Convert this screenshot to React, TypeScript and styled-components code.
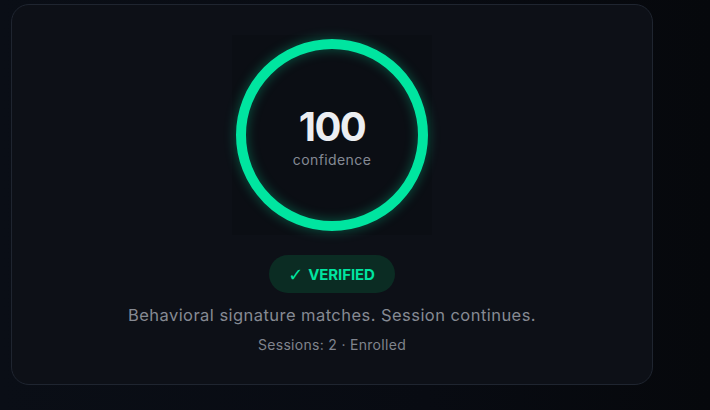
import styled, { createGlobalStyle } from "styled-components";

const GlobalStyle = createGlobalStyle`
  html, body {
    margin: 0;
    padding: 0;
    background: #07090e;
  }
  body {
    font-family: Inter, "Noto Sans", sans-serif;
    -webkit-font-smoothing: antialiased;
  }
`;

const Page = styled.div`
  width: 710px;
  height: 410px;
  box-sizing: border-box;
  padding: 4px 0 0 11px;
  background: linear-gradient(90deg, #0a0e16 0%, #080b12 60%, #06080c 100%);
`;

const Card = styled.div`
  width: 642px;
  height: 381px;
  box-sizing: border-box;
  border: 1px solid #1f2530;
  border-radius: 18px;
  background: #0d1017;
  padding-top: 30px;
  display: flex;
  flex-direction: column;
  align-items: center;
`;

const RingWrap = styled.div`
  position: relative;
  width: 200px;
  height: 200px;
  background: #0b0e14;
`;

const Ring = styled.svg`
  display: block;
  filter: drop-shadow(0 0 6px rgba(0, 230, 160, 0.35));
`;

const Center = styled.div`
  position: absolute;
  inset: 0;
  display: flex;
  flex-direction: column;
  align-items: center;
  justify-content: center;
  padding-top: 4px;
`;

const Score = styled.div`
  font-size: 40px;
  font-weight: 700;
  color: #eceef2;
  letter-spacing: -1.5px;
  line-height: 42px;
`;

const ScoreLabel = styled.div`
  font-size: 14px;
  color: #858a94;
  margin-top: 3px;
  letter-spacing: 0.4px;
`;

const Badge = styled.div`
  margin-top: 20px;
  height: 38px;
  padding: 0 20px 0 19px;
  border-radius: 19px;
  background: #0b2c23;
  color: #00e5a0;
  font-size: 15px;
  font-weight: 700;
  display: flex;
  align-items: center;
  gap: 5px;
  letter-spacing: -0.1px;
`;

const Check = styled.span`
  font-family: "DejaVu Sans", sans-serif;
  font-size: 18px;
  font-weight: 700;
`;

const Message = styled.div`
  margin-top: 10px;
  font-size: 16.5px;
  line-height: 24px;
  color: #868a93;
  letter-spacing: 0.45px;
`;

const Meta = styled.div`
  margin-top: 8px;
  font-size: 14px;
  line-height: 20px;
  color: #80848d;
  letter-spacing: 0.3px;
`;

export default function App() {
  const score = 100;
  const r = 91;
  const circ = 2 * Math.PI * r;
  return (
    <>
      <GlobalStyle />
      <Page>
        <Card>
          <RingWrap>
            <Ring width="200" height="200" viewBox="0 0 200 200">
              <circle cx="100" cy="100" r={r} fill="none" stroke="#1a1f28" strokeWidth="10" />
              <circle
                cx="100"
                cy="100"
                r={r}
                fill="none"
                stroke="#00e5a0"
                strokeWidth="10"
                strokeDasharray={circ}
                strokeDashoffset={circ * (1 - score / 100)}
                transform="rotate(-90 100 100)"
              />
            </Ring>
            <Center>
              <Score>{score}</Score>
              <ScoreLabel>confidence</ScoreLabel>
            </Center>
          </RingWrap>
          <Badge>
            <Check>✓</Check>
            <span>VERIFIED</span>
          </Badge>
          <Message>Behavioral signature matches. Session continues.</Message>
          <Meta>Sessions: 2 · Enrolled</Meta>
        </Card>
      </Page>
    </>
  );
}
